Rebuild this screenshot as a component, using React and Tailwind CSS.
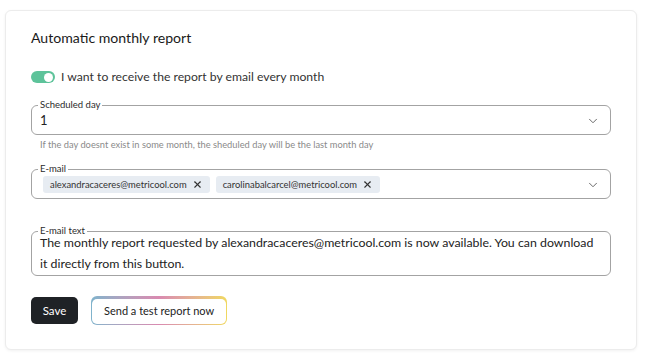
import React from 'react'
import { ChevronDown, X } from 'lucide-react'

const font = { fontFamily: 'Lato, "Noto Sans", sans-serif' }

function Fieldset({ label, children, className = '' }) {
  return (
    <fieldset className={`rounded-[6px] border border-[#a3a3a3] px-[8px] ${className}`}>
      <legend className="px-[2px] text-[9.5px] leading-[10px] text-[#2b2b2b] -ml-[2px]">{label}</legend>
      {children}
    </fieldset>
  )
}

function Chip({ email }) {
  return (
    <span className="flex items-center gap-[5px] rounded-[3px] bg-[#e7ecf2] px-[7px] h-[17px] text-[9.4px] text-[#333]">
      {email}
      <X className="h-[11px] w-[11px] text-[#333]" strokeWidth={2.4} />
    </span>
  )
}

export default function App() {
  return (
    <div className="min-h-[359px] w-[645px] bg-white p-[5px] pt-[10px]" style={font}>
      <div className="w-[632px] rounded-[6px] border border-[#ececec] bg-white px-[25px] pt-[18px] pb-[24px] shadow-[0_1px_3px_rgba(0,0,0,0.06)]">
        <h2 className="text-[14.1px] leading-[18px] font-normal text-[#1a1a1a]">Automatic monthly report</h2>

        <div className="mt-[21px] flex items-center gap-[6px]">
          <span className="flex h-[12px] w-[24px] items-center justify-end rounded-full bg-[#5dc39a] px-[2px]">
            <span className="h-[9px] w-[9px] rounded-full bg-white" />
          </span>
          <span className="text-[12.2px] text-[#333]">I want to receive the report by email every month</span>
        </div>

        <Fieldset label="Scheduled day" className="mt-[14px] w-[580px] h-[35px]">
          <div className="flex h-[21px] items-center justify-between">
            <span className="text-[13px] text-[#222]">1</span>
            <ChevronDown className="h-[14px] w-[14px] text-[#555] mr-[2px]" strokeWidth={1.5} />
          </div>
        </Fieldset>
        <p className="mt-[3px] px-[9px] text-[9.3px] text-[#8a8a8a]">
          If the day doesnt exist in some month, the sheduled day will be the last month day
        </p>

        <Fieldset label="E-mail" className="mt-[12px] w-[580px] h-[35px]">
          <div className="flex h-[21px] items-center justify-between pl-[3px]">
            <div className="flex items-center gap-[6px]">
              <Chip email="alexandracaceres@metricool.com" />
              <Chip email="carolinabalcarcel@metricool.com" />
            </div>
            <ChevronDown className="h-[14px] w-[14px] text-[#555] mr-[2px]" strokeWidth={1.5} />
          </div>
        </Fieldset>

        <Fieldset label="E-mail text" className="mt-[27px] w-[580px] h-[50px]">
          <p className="text-[12.35px] leading-[21px] text-[#222] -mt-[4px]">
            The monthly report requested by alexandracaceres@metricool.com is now available. You can download it directly from this button.
          </p>
        </Fieldset>

        <div className="mt-[20px] flex items-center gap-[13px]">
          <button className="h-[27px] w-[47px] rounded-[5px] bg-[#1f2226] text-[11.5px] text-white">Save</button>
          <span className="rounded-[6px] bg-gradient-to-r from-[#7fb3cc] via-[#d98ab0] to-[#f0d860] p-px">
            <button className="h-[25px] rounded-[5px] bg-white px-[12px] text-[11px] text-[#222]">Send a test report now</button>
          </span>
        </div>
      </div>
    </div>
  )
}
